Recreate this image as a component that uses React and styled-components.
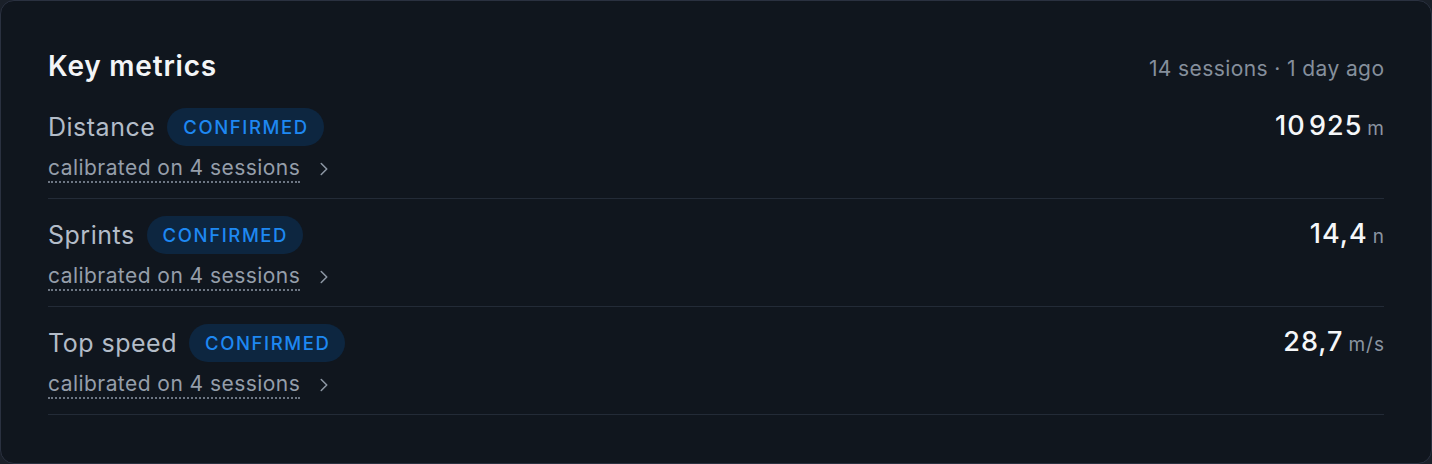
import React from "react";
import styled, { createGlobalStyle } from "styled-components";
import { ChevronRight } from "lucide-react";

const GlobalStyle = createGlobalStyle`
  html, body {
    margin: 0;
    padding: 0;
    background: #1a2029;
  }
  body {
    font-family: Inter, "Noto Sans", "Liberation Sans", sans-serif;
    -webkit-font-smoothing: antialiased;
  }
`;

const Card = styled.section`
  box-sizing: border-box;
  width: 1432px;
  height: 464px;
  background: #10161e;
  border: 1px solid #2a3140;
  border-radius: 14px;
  padding: 49px 47px 0 47px;
`;

const Header = styled.header`
  display: flex;
  justify-content: space-between;
  align-items: baseline;
  margin-bottom: 8px;
`;

const Title = styled.h2`
  margin: 0;
  font-size: 28px;
  line-height: 33px;
  font-weight: 600;
  color: #f3f5f7;
  letter-spacing: 0.8px;
`;

const Meta = styled.span`
  font-size: 21px;
  letter-spacing: 0.4px;
  margin-right: -0.4px;
  color: #858f9c;
`;

const List = styled.div`
  display: flex;
  flex-direction: column;
`;

const Row = styled.div`
  display: flex;
  justify-content: space-between;
  align-items: flex-start;
  height: 108px;
  box-sizing: border-box;
  padding-top: 17px;
  border-bottom: 1.5px solid #232b37;
`;

const Left = styled.div`
  display: flex;
  flex-direction: column;
  gap: 8px;
`;

const LabelLine = styled.div`
  display: flex;
  align-items: center;
  gap: 12px;
`;

const Label = styled.span`
  font-size: 25px;
  letter-spacing: 0.5px;
  color: #b3bcc8;
`;

const Badge = styled.span`
  display: inline-flex;
  align-items: center;
  height: 38px;
  padding: 0 15px 0 16px;
  border-radius: 19px;
  background: #0d2640;
  color: #1e88f2;
  font-size: 18.5px;
  font-weight: 500;
  letter-spacing: 1.6px;
`;

const CalibLine = styled.div`
  display: flex;
  align-items: center;
  gap: 13px;
  color: #8c96a3;
`;

const Calib = styled.span`
  font-size: 21px;
  line-height: 27px;
  letter-spacing: 0.45px;
  color: #959eaa;
  border-bottom: 2px dotted #6d7683;
`;

const Value = styled.div`
  display: flex;
  align-items: baseline;
  gap: 5px;
  margin-top: 1px;
  margin-right: -1px;
`;

const Number = styled.span`
  font-size: 27px;
  font-weight: 500;
  color: #f5f7f9;
  letter-spacing: 1px;
`;

const Unit = styled.span`
  font-size: 19px;
  letter-spacing: 1px;
  color: #8a94a1;
`;

const metrics = [
  { label: "Distance", value: "10\u200A925", unit: "m" },
  { label: "Sprints", value: "14,4", unit: "n" },
  { label: "Top speed", value: "28,7", unit: "m/s" },
];

export default function App() {
  return (
    <>
      <GlobalStyle />
      <Card>
        <Header>
          <Title>Key metrics</Title>
          <Meta>14 sessions · 1 day ago</Meta>
        </Header>
        <List>
          {metrics.map((m) => (
            <Row key={m.label}>
              <Left>
                <LabelLine>
                  <Label>{m.label}</Label>
                  <Badge>CONFIRMED</Badge>
                </LabelLine>
                <CalibLine>
                  <Calib>calibrated on 4 sessions</Calib>
                  <ChevronRight size={22} strokeWidth={1.7} />
                </CalibLine>
              </Left>
              <Value>
                <Number>{m.value}</Number>
                <Unit>{m.unit}</Unit>
              </Value>
            </Row>
          ))}
        </List>
      </Card>
    </>
  );
}
